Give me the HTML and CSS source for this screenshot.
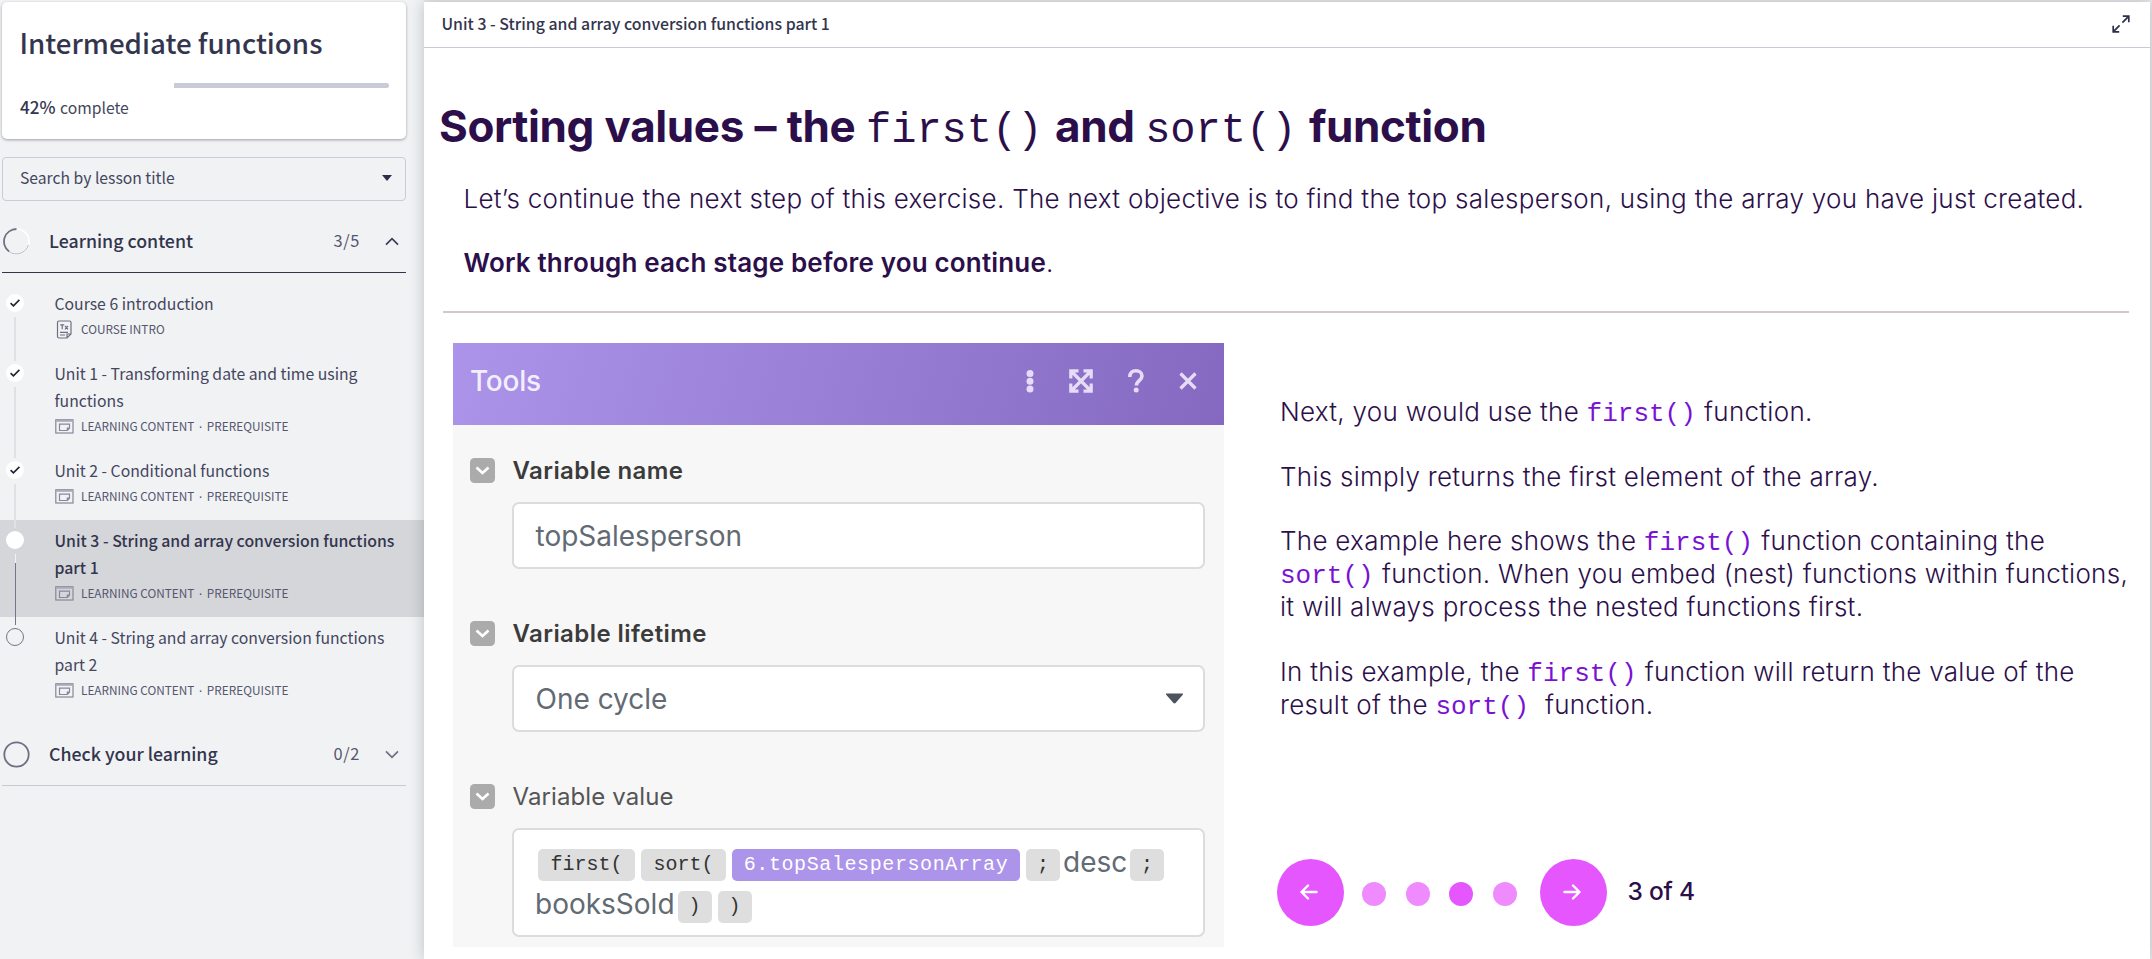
FILE: index.html
```html
<!DOCTYPE html>
<html lang="en">
<head>
<meta charset="utf-8">
<title>Intermediate functions</title>
<link rel="stylesheet" href="styles.css">
</head>
<body>
<svg width="0" height="0" class="defs">
  <symbol id="i-check" viewBox="0 0 18 18"><path d="M4.6 9.2l2.8 2.7 6-6" fill="none" stroke="#1f2033" stroke-width="1.6"/></symbol>
  <symbol id="i-content" viewBox="0 0 19 15"><rect x=".8" y=".8" width="17.200" height="13.200" fill="none" stroke="#85879a" stroke-width="1.200"/><rect x="1" y="1" width="17" height="1.800" fill="#a9abb8"/><path d="M4.500 5.200h10v4l-2.200 2.300H4.500zM14.500 9.200h-2.200v2.300" fill="none" stroke="#85879a" stroke-width="1.200"/></symbol>
  <symbol id="i-fold" viewBox="0 0 25 25"><rect width="25" height="25" rx="4.500" fill="#ababab"/><path d="M6.500 9.500l6 5.500 6-5.500" fill="none" stroke="#fff" stroke-width="2.600"/></symbol>
</svg>

<div class="app">
  <aside class="sidebar">
    <section class="course-card">
      <h1 class="course-title">Intermediate functions</h1>
      <div class="progress"><div class="progress-rest"></div></div>
      <p class="complete"><b>42%</b> <span>complete</span></p>
    </section>

    <div class="search"><span>Search by lesson title</span><svg width="10" height="6"><path d="M0 0h10L5 6z" fill="#2d2f4a"/></svg></div>

    <div class="group open">
      <svg width="27" height="27" viewBox="0 0 27 27" fill="none"><circle cx="13.500" cy="13.500" r="12.500" stroke="#fff" stroke-width="1.600"/><path d="M13.500 1A12.500 12.500 0 0 0 6 23.500" stroke="#6d6f83" stroke-width="1.800"/><path d="M6 23.500A12.500 12.500 0 0 0 25.400 17" stroke="#b4b5bf" stroke-width="1"/></svg>
      <span class="group-name">Learning content</span>
      <span class="count">3/5</span>
      <svg width="14" height="9" viewBox="0 0 14 9" fill="none"><path d="M1 7.700l6-6 6 6" stroke="#3b3d56" stroke-width="1.700"/></svg>
    </div>

    <ol class="lessons">
      <li class="lesson">
        <div class="rail"><svg class="dot" width="18" height="18"><use href="#i-check"/></svg><i class="line"></i></div>
        <div class="lesson-body">
          <p class="lesson-title">Course 6 introduction</p>
          <p class="meta"><svg width="19" height="19" viewBox="0 0 19 19" fill="none" stroke="#6d6f83" stroke-width="1.200"><path d="M4 1h10.500a1.500 1.500 0 0 1 1.500 1.500V14l-4 4H4a1.500 1.500 0 0 1-1.500-1.500v-14A1.500 1.500 0 0 1 4 1zM16 14h-4v4M5 12.300h8M5 15h5M5.200 4.800h4M7.200 4.800v4.400M10 6l3 3.300M13 6l-3 3.300"/></svg><span>COURSE INTRO</span></p>
        </div>
      </li>
      <li class="lesson">
        <div class="rail"><svg class="dot" width="18" height="18"><use href="#i-check"/></svg><i class="line"></i></div>
        <div class="lesson-body">
          <p class="lesson-title">Unit 1 - Transforming date and time using<br>functions</p>
          <p class="meta"><svg width="19" height="15"><use href="#i-content"/></svg><span>LEARNING CONTENT</span><span class="sep">·</span><span>PREREQUISITE</span></p>
        </div>
      </li>
      <li class="lesson">
        <div class="rail"><svg class="dot" width="18" height="18"><use href="#i-check"/></svg><i class="line"></i></div>
        <div class="lesson-body">
          <p class="lesson-title">Unit 2 - Conditional functions</p>
          <p class="meta"><svg width="19" height="15"><use href="#i-content"/></svg><span>LEARNING CONTENT</span><span class="sep">·</span><span>PREREQUISITE</span></p>
        </div>
      </li>
      <li class="lesson current">
        <div class="rail"><span class="dot"></span><i class="line"></i></div>
        <div class="lesson-body">
          <p class="lesson-title">Unit 3 - String and array conversion functions<br>part 1</p>
          <p class="meta"><svg width="19" height="15"><use href="#i-content"/></svg><span>LEARNING CONTENT</span><span class="sep">·</span><span>PREREQUISITE</span></p>
        </div>
      </li>
      <li class="lesson todo">
        <div class="rail"><span class="dot"></span></div>
        <div class="lesson-body">
          <p class="lesson-title">Unit 4 - String and array conversion functions<br>part 2</p>
          <p class="meta"><svg width="19" height="15"><use href="#i-content"/></svg><span>LEARNING CONTENT</span><span class="sep">·</span><span>PREREQUISITE</span></p>
        </div>
      </li>
    </ol>

    <div class="group">
      <svg width="27" height="27" fill="none"><circle cx="13.500" cy="13.500" r="12.200" stroke="#6d6f83" stroke-width="1.800"/></svg>
      <span class="group-name">Check your learning</span>
      <span class="count">0/2</span>
      <svg width="14" height="9" viewBox="0 0 14 9" fill="none"><path d="M1 1.300l6 6 6-6" stroke="#6d6f83" stroke-width="1.700"/></svg>
    </div>
  </aside>

  <main class="main">
    <header class="topbar">
      <span class="topbar-title">Unit 3 - String and array conversion functions part 1</span>
      <svg width="18" height="18" viewBox="0 0 18 18" fill="none" stroke="#2d2f4a" stroke-width="1.700"><path d="M10.800 1.200h6v6M16.600 1.400l-6.200 6.200M7.200 16.800h-6v-6M1.400 16.600l6.200-6.200"/></svg>
    </header>

    <article class="slide">
      <h2 class="heading">Sorting values – the <code>first()</code> and <code>sort()</code> function</h2>
      <p class="lead">Let’s continue the next step of this exercise. The next objective is to find the top salesperson, using the array you have just created.</p>
      <p class="lead strong"><b>Work through each stage before you continue</b>.</p>
      <hr class="rule">

      <div class="columns">
        <section class="tool">
          <div class="tool-head">
            <span class="tool-title">Tools</span>
            <svg class="dots" width="8" height="24" fill="#e6dcf8"><circle cx="4" cy="4.500" r="3.500"/><circle cx="4" cy="12.200" r="3.500"/><circle cx="4" cy="20" r="3.500"/></svg>
            <svg class="expand" width="24" height="24" viewBox="0 0 24 24" fill="none" stroke="#e6dcf8" stroke-width="3.200"><path d="M9.500 1.800H1.800v7.700M14.500 1.800h7.700v7.700M9.500 22.200H1.800v-7.700M14.500 22.200h7.700v-7.700M2.500 2.500l19 19M21.500 2.500l-19 19"/></svg>
            <svg class="help" width="16" height="24" viewBox="0 0 16 24" fill="none" stroke="#e6dcf8" stroke-width="3.600"><path d="M1.800 8c0-4 2.600-6.200 6-6.200 3.700 0 6.200 2.200 6.200 5.200 0 4.600-5.600 4.500-5.600 9.500"/><circle cx="8.200" cy="21" r="2.500" fill="#e6dcf8" stroke="none"/></svg>
            <svg class="close" width="18" height="18" fill="none" stroke="#e6dcf8" stroke-width="3.300"><path d="M1.500 1.500l15 15M16.500 1.500l-15 15"/></svg>
          </div>
          <div class="tool-body">
            <div class="field">
              <svg width="25" height="25"><use href="#i-fold"/></svg>
              <label class="label bold">Variable name</label>
              <div class="input"><span>topSalesperson</span></div>
            </div>
            <div class="field">
              <svg width="25" height="25"><use href="#i-fold"/></svg>
              <label class="label bold">Variable lifetime</label>
              <div class="input"><span>One cycle</span><svg width="19" height="12"><path d="M1.500 0.500h16q1 .3 .3 1.300l-7 8q-1.300 1.200-2.600 0l-7-8q-.7-1 .3-1.300z" fill="#4b535d"/></svg></div>
            </div>
            <div class="field">
              <svg width="25" height="25"><use href="#i-fold"/></svg>
              <label class="label">Variable value</label>
              <div class="input formula">
                <div class="formula-row"><code class="chip w97">first(</code><code class="chip w85">sort(</code><code class="chip ref">6.topSalespersonArray</code><code class="chip w34">;</code><span class="word">desc</span><code class="chip w34">;</code></div>
                <div class="formula-row"><span class="word first">booksSold</span><code class="chip w34">)</code><code class="chip w34">)</code></div>
              </div>
            </div>
          </div>
        </section>

        <section class="notes">
          <p>Next, you would use the <code>first()</code> function.</p>
          <p>This simply returns the first element of the array.</p>
          <p>The example here shows the <code>first()</code> function containing the<br><code>sort()</code> function. When you embed (nest) functions within functions,<br>it will always process the nested functions first.</p>
          <p>In this example, the <code>first()</code> function will return the value of the<br>result of the <code>sort()</code>&nbsp; function.</p>
          <nav class="pager">
            <span class="arrow prev"><svg width="18" height="16" fill="none" stroke="#fff" stroke-width="2.400" stroke-linecap="round" stroke-linejoin="round"><path d="M16.500 8h-15M8 1.500L1.500 8 8 14.500"/></svg></span>
            <i class="step"></i><i class="step"></i><i class="step on"></i><i class="step"></i>
            <span class="arrow next"><svg width="18" height="16" fill="none" stroke="#fff" stroke-width="2.400" stroke-linecap="round" stroke-linejoin="round"><path d="M1.500 8h15M10 1.500L16.500 8 10 14.500"/></svg></span>
            <span class="page">3 of 4</span>
          </nav>
        </section>
      </div>
    </article>
  </main>
</div>
</body>
</html>
```
FILE: styles.css
```css
* { box-sizing: border-box; }
body { margin: 0; background: #e9e9ea; overflow: hidden; }
h1, h2, p, ol { margin: 0; padding: 0; font-weight: inherit; }
svg { display: block; flex: none; }
.defs { position: absolute; }

.app { display: flex; width: 2152px; height: 959px; }

/* Sidebar */
.sidebar {
  width: 424px;
  flex: none;
  padding-top: 2px;
  background: #f1f2f4;
  color: #44465e;
  font-family: "Noto Sans CJK SC", sans-serif;
}
.course-card {
  height: 137px;
  margin: 0 18px 0 2px;
  padding: 22px 17px 0;
  background: #fff;
  border-radius: 5px;
  box-shadow: 0 1px 3px rgba(30, 32, 50, .4);
}
.course-title { padding-left: .5px; font-size: 27.7px; font-weight: 500; line-height: 36px; white-space: nowrap; color: #33354e; }
.progress { display: flex; justify-content: flex-end; margin-top: 23px; height: 5px; }
.progress-rest { width: 215px; background: #c9cbd6; border-radius: 0 3px 3px 0; }
.complete { margin-top: 8px; padding-left: 1px; font-size: 15.7px; line-height: 24px; }
.complete b { margin-right: 1px; font-size: 17.1px; font-weight: 500; line-height: 1; color: #33354e; }
.search {
  display: flex;
  align-items: center;
  justify-content: space-between;
  height: 44px;
  margin: 18px 18px 0 2px;
  padding: 0 13px 2px 17px;
  border: 1px solid #c9cbd6;
  border-radius: 4px;
  font-size: 15.7px;
  line-height: 24px;
}
.group {
  display: flex;
  align-items: center;
  height: 63px;
  margin: 9px 18px 0 2px;
  padding: 0 7px 0 .5px;
  border-bottom: 1px solid #c9cacf;
}
.group.open { border-color: #33354e; }
.group-name { flex: 1; padding: 0 0 2px 19.5px; font-size: 17.75px; font-weight: 500; line-height: 24px; color: #33354e; }
.count { margin-right: 25px; padding-bottom: 2px; font-size: 16.4px; line-height: 24px; letter-spacing: .6px; color: #55576e; }

.lessons { list-style: none; padding-top: 10px; }
.lesson { display: flex; padding-bottom: 14px; }
.rail { position: relative; z-index: 1; width: 30px; margin: 11px 0 -22px; display: flex; flex-direction: column; align-items: center; }
.dot { flex: none; width: 18px; height: 18px; border-radius: 50%; background: #fff; }
.line { flex: 1; width: 2px; margin-top: 5px; background: #e0e1e4; }
.lesson-body { padding: 7px 0 0 24.5px; white-space: nowrap; }
.lesson-title { font-size: 15.78px; line-height: 27px; }
.meta { display: flex; align-items: center; height: 20px; margin-top: 2px; font-size: 11.8px; line-height: 20px; color: #55576e; }
.meta svg { margin-right: 7.5px; }
.sep { width: 12.5px; font-family: "Liberation Sans", sans-serif; font-size: 14px; text-align: center; }
.current { background: #d5d6da; }
.current .lesson-title { font-size: 15.84px; font-weight: 500; color: #33354e; }
.current .line { width: 1px; background: linear-gradient(#f1f2f4 9px, #74768a 9px); }
.todo .dot { background: none; border: 1.5px solid #74768a; }

/* Lesson viewer */
.main {
  position: relative;
  width: 1726px;
  flex: none;
  height: 957px;
  margin-top: 2px;
  background: #fff;
  box-shadow: 0 0 14px rgba(30, 32, 50, .24);
}
.topbar {
  display: flex;
  align-items: center;
  justify-content: space-between;
  height: 46px;
  padding: 0 20.5px 2px 17.5px;
  border-bottom: 1px solid #c9c8d8;
  font-family: "Noto Sans CJK SC", sans-serif;
  font-size: 15.87px;
  font-weight: 500;
  line-height: 24px;
  color: #33354e;
}
.slide { padding-top: 50px; color: #2c0f4a; font-family: Inter, sans-serif; white-space: nowrap; }
.slide code { font-family: "Liberation Mono", monospace; line-height: 0; }
.heading { padding-left: 15px; font-size: 44px; font-weight: 700; line-height: 56px; letter-spacing: -.4px; word-spacing: .6px; }
.heading code { margin-right: 2px; font-size: 42px; font-weight: 400; letter-spacing: 0; }
.lead { margin-top: 28px; padding-left: 39.5px; font-size: 26px; font-weight: 300; line-height: 33px; letter-spacing: .288px; }
.lead b { font-weight: 600; letter-spacing: .17px; }
.lead.strong { margin-top: 31px; }
.rule { height: 2px; margin: 32px 21px 30px 19px; border: 0; background: #d0c8cd; }
.columns { display: flex; align-items: flex-start; padding-left: 29px; }

.tool { width: 771px; height: 604px; background: #f7f7f7; }
.tool-head {
  display: flex;
  align-items: center;
  height: 82px;
  padding: 0 27px 7px 17px;
  background: linear-gradient(105deg, #ac94ea, #8569c1);
}
.tool-title { flex: 1; font-size: 28px; font-weight: 500; line-height: 34px; letter-spacing: -.24px; color: #f3eefc; }
.expand { margin-left: 35px; }
.help { margin-left: 35px; }
.close { margin-left: 35px; }
.tool-body { padding: 30px 19px 0 17px; }
.field { display: grid; grid-template-columns: 25px 1fr; column-gap: 17px; row-gap: 17px; align-items: center; margin-bottom: 49px; }
.label { height: 30px; padding-left: .5px; font-size: 24px; line-height: 32px; letter-spacing: .1px; color: #555; }
.label.bold { font-weight: 600; letter-spacing: .42px; color: #3b3b3b; }
.input {
  grid-column: 2;
  display: flex;
  align-items: center;
  justify-content: space-between;
  height: 67px;
  padding: 0 19px 0 21.5px;
  border: 2px solid #dcdcdc;
  border-radius: 7px;
  background: #fff;
  font-size: 28px;
  line-height: 34px;
  color: #626a73;
}
.formula { display: block; height: 109px; padding: 19px 0 0 24px; }
.formula-row { display: flex; height: 42px; }
.slide .chip {
  height: 32px;
  margin-right: 6px;
  border-radius: 5px;
  background: #dedede;
  color: #333;
  font-size: 20px;
  line-height: 32px;
  text-align: center;
}
.slide .chip.ref { width: 288px; background: #ac94ea; color: #fff; letter-spacing: .6px; }
.w97 { width: 97px; }
.w85 { width: 85px; }
.w34 { width: 34px; }
.word { width: 64px; margin: 0 3px 0 -3px; line-height: 27px; }
.word.first { width: auto; margin: 0 3px 0 -3px; }

.notes { padding: 52px 0 0 56px; font-size: 26px; font-weight: 300; line-height: 33px; letter-spacing: .28px; }
.notes p { margin-bottom: 31.5px; }
.notes code { margin-right: .7px; letter-spacing: 0; color: #7a12d4; }
.pager { display: flex; align-items: center; height: 67px; margin: 138px 0 0 -3px; }
.arrow { display: flex; align-items: center; justify-content: center; width: 67px; height: 67px; padding-right: 4px; border-radius: 50%; background: #e656ff; }
.prev { margin-right: 18px; }
.next { margin: 0 20.5px 0 4px; }
.step { width: 24px; height: 24px; margin: 3px 19.5px 0 0; border-radius: 50%; background: #f08bff; }
.step.on { background: #e656ff; }
.page { font-size: 24.5px; font-weight: 500; letter-spacing: -.2px; padding-bottom: 2px; }
```
